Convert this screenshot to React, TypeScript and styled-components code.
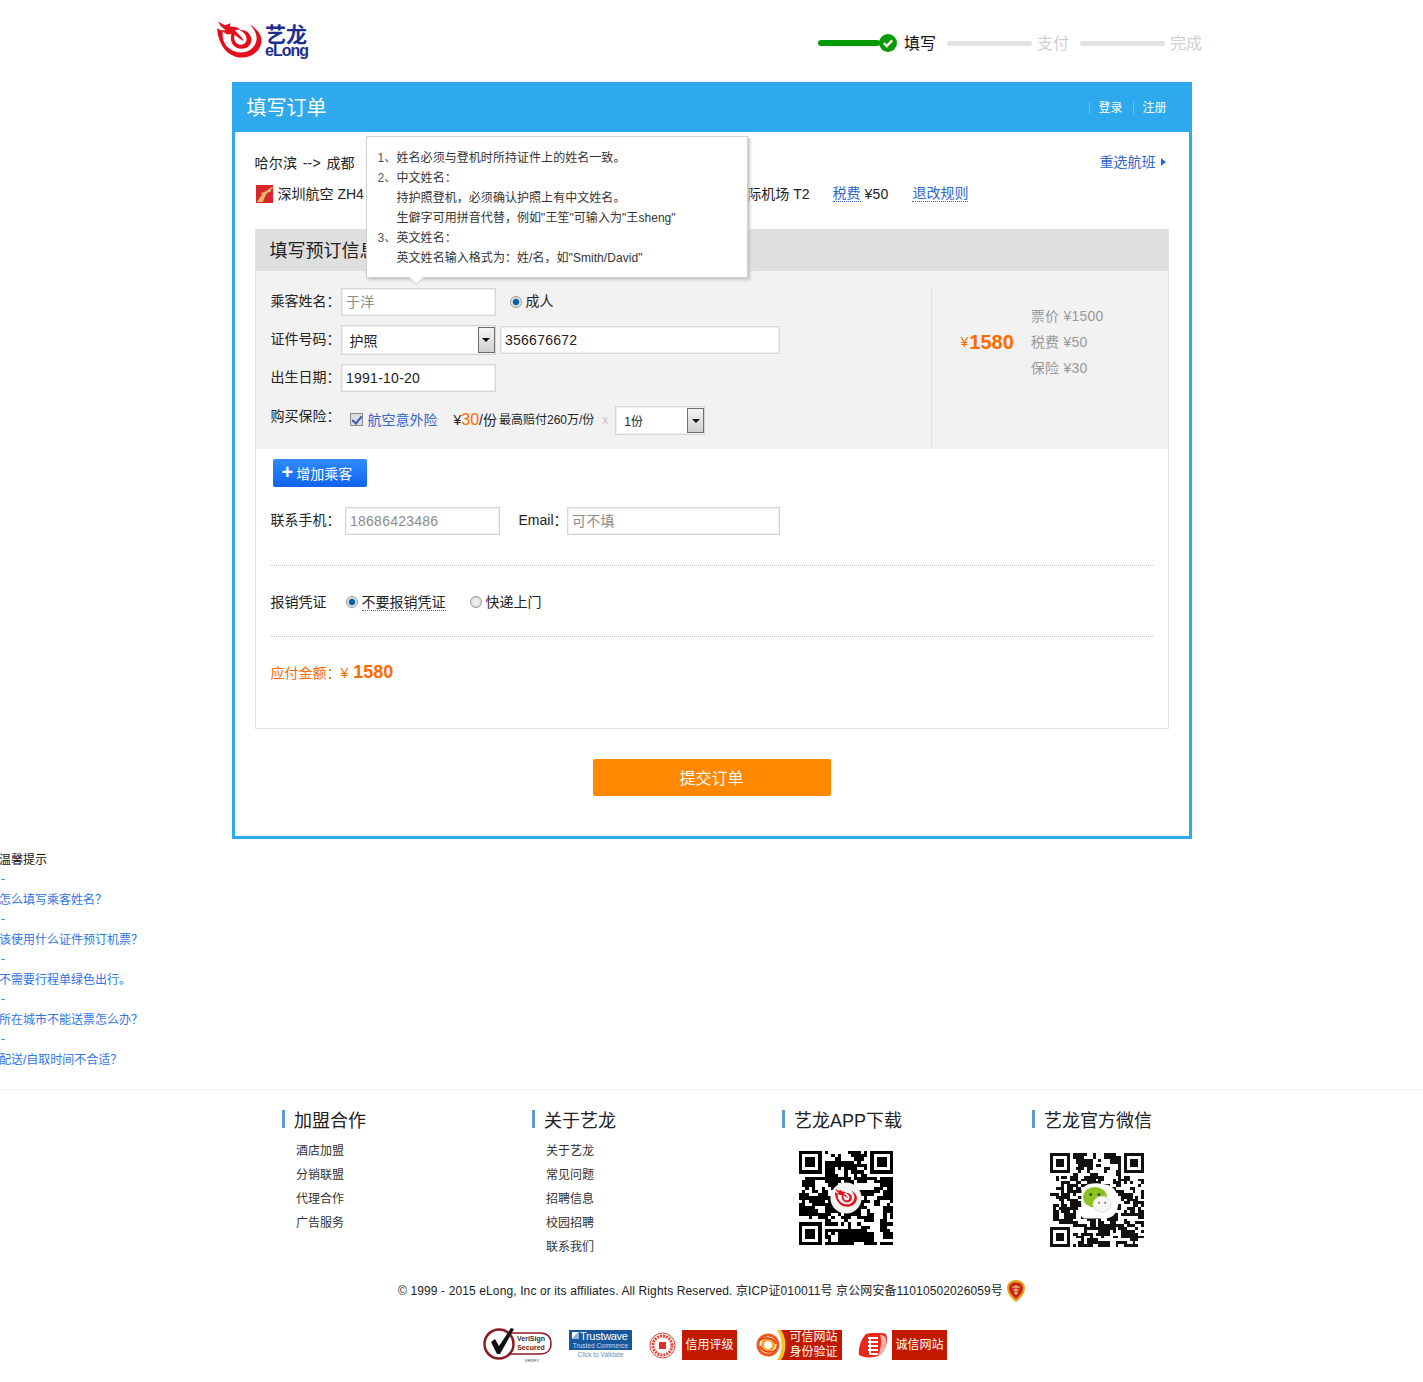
import React from "react";
import styled, { createGlobalStyle } from "styled-components";

const FONT = `"Liberation Sans", "Noto Sans CJK SC", sans-serif`;

const Global = createGlobalStyle`
  html, body { margin: 0; padding: 0; background: #fff; }
  body { font: 14px/20px ${FONT}; color: #222; }
  * { box-sizing: border-box; }
  a { text-decoration: none; }
`;

/* ---------- header ---------- */
const TopBar = styled.header`
  width: 989px; height: 82px; margin: 0 auto; padding: 20px 4px 0 0;
  display: flex; justify-content: space-between; align-items: flex-start;
`;
const Logo = styled.div`display: flex; gap: 3px; width: 92px; height: 40px;`;
const LogoWords = styled.div`display: flex; flex-direction: column; color: #1c2f8f; font-weight: 700; margin-top: 4px;`;
const LogoCn = styled.span`font-size: 21px; line-height: 21px; width: 44px; white-space: nowrap;`;
const LogoEn = styled.span`font-size: 16px; line-height: 12px; letter-spacing: -1px;`;
const Steps = styled.ol`display: flex; align-items: center; height: 20px; margin: 13px 0 0; padding: 0; list-style: none;`;
const Step = styled.li`display: flex; align-items: center; margin-left: 11px; font-size: 16px; color: #d0d0d0;`;
const DoneStep = styled(Step)`margin-left: 0; color: #111;`;
const GreenBar = styled.span`width: 62px; height: 6px; border-radius: 3px; background: #079a07;`;
const GrayBar = styled.span`width: 85px; height: 5px; border-radius: 3px; background: #e2e2e2; margin-right: 5px;`;
const StepLabel = styled.span`padding-top: 2px;`;
const DoneLabel = styled(StepLabel)`margin-left: 7px;`;

/* ---------- order box ---------- */
const OrderBox = styled.main`width: 960px; height: 757px; margin: 0 auto; border: 3px solid #2ea9ed; border-top: 0;`;
const TitleBar = styled.div`
  height: 50px; margin: 0 -3px; padding: 2px 25px 0 15px; background: #2ea9ed; color: #fff;
  display: flex; justify-content: space-between; align-items: center;
`;
const Title = styled.h1`margin: 0; font-size: 20px; font-weight: 400;`;
const Auth = styled.div`display: flex; font-size: 12px;`;
const AuthLink = styled.a`color: #fff; margin-left: 11px; padding-left: 8px; border-left: 1px solid #69c0f1; line-height: 12px; height: 12px;`;
const Content = styled.div`position: relative; padding: 0 20px;`;
const Flight = styled.section`height: 97px; padding: 21px 2px 0 0; margin-left: -1px;`;
const FlightTop = styled.div`display: flex; justify-content: space-between; align-items: center; height: 20px;`;
const Route = styled.div`font-size: 14px; color: #222; word-spacing: 1.5px; letter-spacing: .2px; padding-left: 1px;`;
const Reselect = styled.a`display: flex; align-items: center; gap: 5px; color: #2e66cc; font-size: 14px; margin: 0 1px 2px 0;`;
const Triangle = styled.i`width: 0; height: 0; border-left: 5px solid #2e66cc; border-top: 4px solid transparent; border-bottom: 4px solid transparent;`;
const FlightRow = styled.div`display: flex; align-items: center; margin-top: 11px; height: 20px; padding-left: 2px;`;
const FlightInfo = styled.div`display: flex; justify-content: space-between; width: 532px; margin: 0 23px 0 5px; white-space: nowrap;`;
const DotLink = styled.a`color: #2e66cc; border-bottom: 1px dotted #2e66cc; line-height: 15px;`;
const Fee = styled.span`margin: 0 24px 0 4px; letter-spacing: .2px;`;

const Panel = styled.section`border: 1px solid #e0e0e0; border-top: 0; height: 500px;`;
const PanelHead = styled.h2`margin: 0 -1px; height: 42px; padding: 0 15px; background: #dfdfdf; font-size: 18px; line-height: 45px; font-weight: 400; color: #222;`;
const GreySection = styled.div`display: flex; background: #f2f2f2;`;
const Form = styled.div`width: 675px; padding: 17px 0 14px 15px;`;
const Row = styled.div<{ $mt?: number }>`display: flex; align-items: center; margin-top: ${p => p.$mt ?? 0}px; white-space: nowrap;`;
const Label = styled.label<{ $w?: number; $up?: number }>`
  width: ${p => p.$w ?? 70}px; flex: none; color: #222; margin-bottom: ${p => p.$up ?? 2}px;
`;
const Raised = styled.span`display: flex; align-items: center; margin-bottom: 2px;`;
const Field = styled.input<{ $w: number }>`
  width: ${p => p.$w}px; height: 28px; padding: 0 4.5px; background: #fff; color: #222;
  border: 1px solid #d6d6d6; box-shadow: inset 0 0 0 1px #f1f1f1; outline: none;
  font: 14px ${FONT}; letter-spacing: .25px;
  &::placeholder { color: #8b8b8b; opacity: 1; }
`;
const SelectBox = styled.div<{ $w: number; $h: number; $fs: number; $pad: number }>`
  width: ${p => p.$w}px; height: ${p => p.$h}px; padding-left: ${p => p.$pad}px; background: #fff;
  border: 1px solid #d6d6d6; box-shadow: inset 0 0 0 1px #f1f1f1; font-size: ${p => p.$fs}px;
  display: flex; align-items: center; justify-content: space-between; flex: none;
`;
const SelectValue = styled.span`padding-top: 2px;`;
const SelectArrow = styled.span`
  width: 17px; align-self: stretch; margin: 1px 0; border: 1px solid #6e6e6e; background: linear-gradient(#f4f4f4, #cfcfcf);
  display: flex; align-items: center; justify-content: center;
  &::after { content: ""; border-top: 4px solid #111; border-left: 4px solid transparent; border-right: 4px solid transparent; }
`;
const Gap = styled.span<{ $w: number }>`display: inline-block; flex: none; width: ${p => p.$w}px;`;
const Radio = styled.span<{ $on?: boolean }>`
  width: 12px; height: 12px; border-radius: 50%; flex: none; border: 1px solid #9a9a9a; margin-right: 4px;
  background: ${p => p.$on
    ? "radial-gradient(circle, #0b5fa5 0 2.5px, #3b9ad6 3.2px, #e9e9e9 3.8px, #d8d8d8 100%)"
    : "radial-gradient(circle, #efefef 0 2px, #cfcfcf 100%)"};
`;
const Check = styled.span`
  width: 13px; height: 13px; flex: none; border: 1px solid #8a8a8a; background: #d8dde8; position: relative; margin-right: 5px;
  &::after { content: ""; position: absolute; left: 3px; top: 0; width: 4px; height: 8px; border: solid #3b5aa8; border-width: 0 2px 2px 0; transform: rotate(40deg); }
`;
const InsLink = styled.a`color: #2e66cc; font-size: 14px;`;
const Small = styled.span`font-size: 12px;`;
const Orange = styled.span`color: #ff6a00; font-size: 16px;`;
const Times = styled.span`font-size: 12px; color: #c4c4c4;`;

const PriceSide = styled.aside`
  flex: 1; margin-top: 16px; padding: 16px 0 0 29px; border-left: 1px solid #e0e0e0;
  display: flex; align-items: flex-start; gap: 17px;
`;
const Total = styled.div`height: 78px; display: flex; align-items: center; color: #ff6a00; font-size: 14px; white-space: nowrap;`;
const TotalNum = styled.b`font-size: 20px; margin-left: 1px;`;
const Details = styled.ul`margin: 0; padding: 0; list-style: none; color: #999; line-height: 26px; letter-spacing: .25px;`;

const AddBtn = styled.button`
  display: flex; align-items: center; gap: 3px; width: 94px; height: 28px; margin: 10px 0 0 17px; padding: 0 0 0 9px; border: 0; border-radius: 2px;
  background: linear-gradient(#2f8dfb, #0f63ef); color: #fff; font: 14px ${FONT};
`;
const Plus = styled.span`font-size: 20px; font-weight: 700; line-height: 20px; margin-top: -3px;`;
const Lower = styled.div`padding: 0 15px;`;
const Dotted = styled.div<{ $mt: number }>`margin-top: ${p => p.$mt}px; border-top: 1px dotted #c4c4c4;`;
const ChooseText = styled.span`border-bottom: 1px dotted #2e66cc; line-height: 16px;`;
const Amount = styled.div`margin-top: 25px; color: #ff6a00; display: flex; align-items: baseline; height: 20px;`;
const AmountNum = styled.b`font-size: 18px; margin-left: 5px;`;
const Submit = styled.button`
  display: block; width: 238px; height: 37px; margin: 30px auto 0; padding: 0 0 2px; border: 0; border-radius: 2px; background: #ff8800; color: #fff; font: 16px ${FONT};
`;

/* ---------- tooltip ---------- */
const Tip = styled.div`
  position: absolute; left: 131px; top: 4px; width: 382px; height: 142px; padding: 11px 10px 0 11px; z-index: 2;
  background: #fff; border: 1px solid #cfcfcf; box-shadow: 2px 2px 3px #c4c4c4; font-size: 12px; line-height: 20px; color: #333;
  &::after {
    content: ""; position: absolute; left: 44px; bottom: -6px; width: 10px; height: 10px; background: #fff;
    border: solid #d4d4d4; border-width: 0 1px 1px 0; transform: rotate(45deg);
  }
`;
const TipLine = styled.div`display: flex; white-space: nowrap; letter-spacing: .05px;`;
const TipNum = styled.span`width: 19px; flex: none; color: #555;`;

/* ---------- tips ---------- */
const Hints = styled.section`margin: 11px 0 0 -1px; font-size: 12px; line-height: 20px;`;
const HintTitle = styled.div`color: #111;`;
const HintList = styled.ul`margin: 0; padding: 0; list-style: none;`;
const HintDash = styled.div`color: #2e74e8; padding-left: 2px; margin-top: -1px; margin-bottom: 1px;`;
const HintLink = styled.a`color: #2e74e8; display: block;`;

/* ---------- footer ---------- */
const Footer = styled.footer`margin-top: 19px; border-top: 1px solid #eee; padding-top: 20px;`;
const Cols = styled.div`display: grid; grid-template-columns: repeat(4, 250px); margin-left: 282px; height: 148px;`;
const ColHead = styled.h3`margin: 0; height: 18px; padding-left: 9px; border-left: 3px solid #5b9bd0; font-size: 18px; line-height: 22px; font-weight: 400; color: #222; white-space: nowrap;`;
const ColList = styled.ul`margin: 11px 0 0; padding: 0 0 0 14px; list-style: none; font-size: 12px; line-height: 24px; color: #333;`;
const QrWrap = styled.div<{ $l: number; $t: number }>`margin: ${p => p.$t}px 0 0 ${p => p.$l}px; line-height: 0;`;
const Copy = styled.div`margin-top: 22px; height: 22px; display: flex; justify-content: center; align-items: center; gap: 4px; font-size: 12px; letter-spacing: .12px; color: #222; white-space: nowrap;`;
const Badges = styled.div`margin: 23px auto 0; height: 40px; width: 465px; transform: translateX(3px); display: flex; align-items: center;`;
const RedTag = styled.span<{ $w: number; $ml: number; $pr?: number }>`
  width: ${p => p.$w}px; margin-left: ${p => p.$ml}px; height: 30px; padding-right: ${p => p.$pr ?? 0}px; background: #c21a00; color: #fff; flex: none;
  font-size: 12px; line-height: 15px; display: flex; align-items: center; justify-content: center; text-align: center;
`;
const Trust = styled.div`width: 63px; margin-left: 17px; flex: none; margin-top: -2px;`;
const TrustBlue = styled.div`height: 20px; background: #17589c; color: #fff; overflow: hidden;`;
const TrustTop = styled.div`display: flex; align-items: center; gap: 1px; padding-left: 3px; font-size: 11px; line-height: 12px; letter-spacing: -.3px; white-space: nowrap;`;
const TrustMark = styled.i`width: 7px; height: 7px; flex: none; background: linear-gradient(135deg, #fff 50%, #8fb4da 50%);`;
const TrustSmall = styled.div`font-size: 6.5px; line-height: 8px; text-align: center; color: #c9d8ea; white-space: nowrap;`;
const TrustBelow = styled(TrustSmall)`color: #6d8fbd; line-height: 9px;`;

/* ---------- drawings ---------- */
const SwirlPaths = () => (
  <>
    <path d="M0 8 C1 20 6 33 19 37 C30 40 42 35 45 24 C47 16 42 9 33 4 C40 10 43 19 38 26 C33 34 21 35 13 29 C7 25 5 18 6 11 Z" />
    <path d="M15 13 C12 21 17 29 25 29 C32 29 36 24 35 18 C34 13 29 9 23 10 C28 12 31 16 30 21 C28 26 22 26 19 22 C17 19 17 16 19 13 Z" />
    <path d="M1 1 L8 5 L14 3 L13 6 L20 7 L24 9 L18 10 L22 14 C25 17 27 19 27 21 C24 19 20 16 17 14 L10 14 L4 10 L9 10 L4 6 Z" />
  </>
);
const Swirl = () => (
  <svg width="46" height="40" viewBox="0 0 46 40" fill="#e2101c"><SwirlPaths /></svg>
);
const AirlineIcon = () => (
  <svg width="17" height="18" viewBox="0 0 17 18">
    <rect width="17" height="18" fill="#d9262c" />
    <path d="M1 17 C4 11 9 6 16 2 L17 3 C12 6 9 10 7 17 Z M5 8 L15 5 L15 6.5 L6 9.5 Z" fill="#e8b96a" />
  </svg>
);
const CheckBadge = () => (
  <svg width="18" height="18" viewBox="0 0 18 18" style={{ marginLeft: -1 }}>
    <circle cx="9" cy="9" r="9" fill="#079a07" />
    <path d="M4.8 9.2 L7.8 12 L13.2 6.4" fill="none" stroke="#fff" strokeWidth="2.4" />
  </svg>
);
const qrPath = (n: number, seed: number, black: number) => {
  let s = seed;
  const rnd = () => (s = (s * 1103515245 + 12345) & 0x7fffffff) / 0x7fffffff;
  let d = "";
  const inF = (x: number, y: number) =>
    (x < 8 && y < 8) || (x >= n - 8 && y < 8) || (x < 8 && y >= n - 8);
  const prev: boolean[] = [];
  for (let y = 0; y < n; y++) {
    let left = false;
    for (let x = 0; x < n; x++) {
      const r = rnd();
      const on = r < 0.35 ? left : r < 0.55 ? !!prev[x] : rnd() < black;
      prev[x] = on; left = on;
      if (on && !inF(x, y)) d += `M${x} ${y}h1v1h-1z`;
    }
  }
  [[0, 0], [n - 7, 0], [0, n - 7]].forEach(([x, y]) => {
    d += `M${x} ${y}h7v7h-7zM${x + 1} ${y + 1}v5h5v-5zM${x + 2} ${y + 2}h3v3h-3z`;
  });
  return d;
};
const AppQr = () => (
  <svg width="94" height="94" viewBox="0 0 29 29" shapeRendering="crispEdges">
    <path d={qrPath(29, 77, 0.62)} fill="#000" fillRule="evenodd" />
    <circle cx="14.5" cy="14.5" r="4.8" fill="#f4f4f4" shapeRendering="auto" />
    <svg x="11" y="11.5" width="7" height="6" viewBox="0 0 46 40" fill="#e2101c" shapeRendering="auto"><SwirlPaths /></svg>
  </svg>
);
const WechatQr = () => (
  <svg width="94" height="94" viewBox="0 0 33 33" shapeRendering="crispEdges">
    <path d={qrPath(33, 2015, 0.55)} fill="#111" fillRule="evenodd" />
    <g shapeRendering="auto">
      <path d="M11 14 C11 11 15 10 19 11 C22 11 24 14 24 17 C24 21 22 23 19 23 L12 23 C10 22 10 20 11 19 Z" fill="#fff" />
      <ellipse cx="15.8" cy="15.5" rx="4.2" ry="3.6" fill="#8cc21f" />
      <circle cx="14.3" cy="14.6" r=".5" fill="#243" />
      <circle cx="17.2" cy="14.6" r=".5" fill="#243" />
      <ellipse cx="18.3" cy="18" rx="3.2" ry="2.8" fill="#f5f5f5" stroke="#ddd" strokeWidth=".3" />
      <circle cx="17.2" cy="17.5" r=".4" fill="#888" />
      <circle cx="19.4" cy="17.5" r=".4" fill="#888" />
    </g>
  </svg>
);
const PoliceBadge = () => (
  <svg width="18" height="22" viewBox="0 0 18 22">
    <path d="M9 0 C14 0 18 3 18 8 C18 14 13 19 9 22 C5 19 0 14 0 8 C0 3 4 0 9 0 Z" fill="#e8a51a" />
    <path d="M9 2.5 C13 2.5 16 4.500 16 8 C16 12.500 12 16.500 9 19 C6 16.500 2 12.500 2 8 C2 4.500 5 2.5 9 2.5 Z" fill="#c8261a" />
    <path d="M5 7 H13 M6 10 H12 M7 13 H11 M9 5 V15" stroke="#f5d98a" strokeWidth="1" fill="none" />
  </svg>
);
const VeriSign = () => (
  <svg width="70" height="38" viewBox="0 0 70 38" style={{ flex: "none", marginTop: -3 }}>
    <path d="M26 8 H58 C67 8 69 14 69 19 C69 25 65 29 58 29 H28" fill="none" stroke="#8f1a24" strokeWidth="1.500" />
    <circle cx="17" cy="19" r="14.500" fill="#fff" stroke="#8f1a24" strokeWidth="2.500" />
    <path d="M9 17 L13 14 L17 21 L29 3 L32 4 L18 29 L15 29 Z" fill="#111" />
    <text x="49" y="16" fontSize="7" fontWeight="700" textAnchor="middle" fill="#333" fontFamily="Liberation Sans">VeriSign</text>
    <text x="49" y="25" fontSize="7" fontWeight="700" textAnchor="middle" fill="#7a1a20" fontFamily="Liberation Sans">Secured</text>
    <text x="50" y="37" fontSize="4" textAnchor="middle" fill="#444" fontFamily="Liberation Sans">VERIFY</text>
  </svg>
);
const Seal = () => (
  <svg width="27" height="27" viewBox="0 0 27 27" style={{ marginLeft: 17, flex: "none" }}>
    <circle cx="13.500" cy="13.500" r="12.500" fill="#fff" stroke="#e0463c" strokeWidth="1" />
    <circle cx="13.500" cy="13.500" r="9.500" fill="none" stroke="#e0463c" strokeWidth="3" strokeDasharray="2 1" />
    <rect x="10" y="10" width="7" height="7" fill="#d9302a" />
  </svg>
);
const Rosette = () => (
  <svg width="33" height="30" viewBox="0 0 33 30" style={{ marginLeft: 19, flex: "none" }}>
    <path d="M24 0 H33 V30 H24 C30 22 30 8 24 0 Z" fill="#c21a00" />
    <path d="M21 0 H25 C31 8 31 22 25 30 H21 C27 22 27 8 21 0 Z" fill="#f6c21c" />
    <circle cx="12" cy="15" r="10" fill="none" stroke="#ef5a1d" strokeWidth="3" />
    <circle cx="12" cy="15" r="5.500" fill="none" stroke="#f7a11c" strokeWidth="3" />
    <path d="M4 10 C10 6 18 8 20 14 M20 20 C14 24 6 22 4 16" fill="none" stroke="#e22f14" strokeWidth="1.500" />
  </svg>
);
const ShieldMark = () => (
  <svg width="30" height="25" viewBox="0 0 30 25" style={{ marginLeft: 16, marginRight: 4, flex: "none" }}>
    <path d="M8 1 C14 -.5 24 -.5 28 1 C31 8 27 20 20 23 C14 25 6 25 1 22 C0 15 3 6 8 1 Z" fill="#e8281a" />
    <path d="M22 2 C28 2 29 6 28 12 C27 17 24 21 20 23 C23 16 24 8 22 2 Z" fill="#f3b3a8" />
    <path d="M10 5 H20 M10 9 H20 M10 13 H20 M10 17 H20 M12 5 V21 H20" fill="none" stroke="#fff" strokeWidth="2" />
  </svg>
);

const hints = ["怎么填写乘客姓名？", "该使用什么证件预订机票？", "不需要行程单绿色出行。", "所在城市不能送票怎么办？", "配送/自取时间不合适？"];

export default function App() {
  return (
    <>
      <Global />
      <TopBar>
        <Logo>
          <Swirl />
          <LogoWords>
            <LogoCn>艺龙</LogoCn>
            <LogoEn>eLong</LogoEn>
          </LogoWords>
        </Logo>
        <Steps>
          <DoneStep><GreenBar /><CheckBadge /><DoneLabel>填写</DoneLabel></DoneStep>
          <Step><GrayBar /><StepLabel>支付</StepLabel></Step>
          <Step><GrayBar /><StepLabel>完成</StepLabel></Step>
        </Steps>
      </TopBar>

      <OrderBox>
        <TitleBar>
          <Title>填写订单</Title>
          <Auth>
            <AuthLink>登录</AuthLink>
            <AuthLink>注册</AuthLink>
          </Auth>
        </TitleBar>
        <Content>
          <Tip>
            <TipLine><TipNum>1、</TipNum>姓名必须与登机时所持证件上的姓名一致。</TipLine>
            <TipLine><TipNum>2、</TipNum>中文姓名：</TipLine>
            <TipLine><TipNum /> 持护照登机，必须确认护照上有中文姓名。</TipLine>
            <TipLine><TipNum /> 生僻字可用拼音代替，例如"王笙"可输入为"王sheng"</TipLine>
            <TipLine><TipNum>3、</TipNum>英文姓名：</TipLine>
            <TipLine><TipNum /> 英文姓名输入格式为：姓/名，如"Smith/David"</TipLine>
          </Tip>
          <Flight>
            <FlightTop>
              <Route>哈尔滨 --&gt; 成都</Route>
              <Reselect>重选航班<Triangle /></Reselect>
            </FlightTop>
            <FlightRow>
              <AirlineIcon />
              <FlightInfo><span>深圳航空 ZH4</span><span>国际机场 T2</span></FlightInfo>
              <DotLink>税费</DotLink>
              <Fee>¥50</Fee>
              <DotLink>退改规则</DotLink>
            </FlightRow>
          </Flight>
          <Panel>
            <PanelHead>填写预订信息</PanelHead>
            <GreySection>
              <Form>
                <Row>
                  <Label>乘客姓名：</Label>
                  <Field $w={155} placeholder="于洋" />
                  <Gap $w={14} />
                  <Radio $on />
                  <Raised>成人</Raised>
                </Row>
                <Row $mt={9}>
                  <Label>证件号码：</Label>
                  <SelectBox $w={155} $h={30} $fs={14} $pad={8}><SelectValue>护照</SelectValue><SelectArrow /></SelectBox>
                  <Gap $w={4} />
                  <Field $w={280} defaultValue="356676672" />
                </Row>
                <Row $mt={9}>
                  <Label>出生日期：</Label>
                  <Field $w={155} defaultValue="1991-10-20" />
                </Row>
                <Row $mt={14}>
                  <Label $w={79} $up={9}>购买保险：</Label>
                  <Raised>
                    <Check />
                    <InsLink>航空意外险</InsLink>
                    <Gap $w={16} />
                    ¥<Orange>30</Orange>/份
                    <Gap $w={2} />
                    <Small>最高赔付260万/份</Small>
                    <Gap $w={8} />
                    <Times>x</Times>
                    <Gap $w={7} />
                  </Raised>
                  <SelectBox $w={90} $h={29} $fs={12} $pad={8}><SelectValue>1份</SelectValue><SelectArrow /></SelectBox>
                </Row>
              </Form>
              <PriceSide>
                <Total>¥<TotalNum>1580</TotalNum></Total>
                <Details>
                  <li>票价 ¥1500</li>
                  <li>税费 ¥50</li>
                  <li>保险 ¥30</li>
                </Details>
              </PriceSide>
            </GreySection>
            <AddBtn><Plus>+</Plus>增加乘客</AddBtn>
            <Lower>
              <Row $mt={20}>
                <Label $w={74}>联系手机：</Label>
                <Field $w={155} placeholder="18686423486" />
                <Gap $w={19} />
                <Label $w={48}>Email：</Label>
                <Field $w={213} placeholder="可不填" />
              </Row>
              <Dotted $mt={30} />
              <Row $mt={26}>
                <Label $w={75} $up={0}>报销凭证</Label>
                <Radio $on />
                <ChooseText>不要报销凭证</ChooseText>
                <Gap $w={24} />
                <Radio />
                快递上门
              </Row>
              <Dotted $mt={24} />
              <Amount>应付金额：¥<AmountNum>1580</AmountNum></Amount>
            </Lower>
          </Panel>
          <Submit>提交订单</Submit>
        </Content>
      </OrderBox>

      <Hints>
        <HintTitle>温馨提示</HintTitle>
        <HintList>
          {hints.map(h => (
            <li key={h}>
              <HintDash>-</HintDash>
              <HintLink>{h}</HintLink>
            </li>
          ))}
        </HintList>
      </Hints>

      <Footer>
        <Cols>
          <div>
            <ColHead>加盟合作</ColHead>
            <ColList><li>酒店加盟</li><li>分销联盟</li><li>代理合作</li><li>广告服务</li></ColList>
          </div>
          <div>
            <ColHead>关于艺龙</ColHead>
            <ColList><li>关于艺龙</li><li>常见问题</li><li>招聘信息</li><li>校园招聘</li><li>联系我们</li></ColList>
          </div>
          <div>
            <ColHead>艺龙APP下载</ColHead>
            <QrWrap $l={17} $t={23}><AppQr /></QrWrap>
          </div>
          <div>
            <ColHead>艺龙官方微信</ColHead>
            <QrWrap $l={18} $t={25}><WechatQr /></QrWrap>
          </div>
        </Cols>
        <Copy>
          © 1999 - 2015 eLong, Inc or its affiliates. All Rights Reserved. 京ICP证010011号 京公网安备11010502026059号
          <PoliceBadge />
        </Copy>
        <Badges>
          <VeriSign />
          <Trust>
            <TrustBlue>
              <TrustTop><TrustMark />Trustwave</TrustTop>
              <TrustSmall>Trusted Commerce</TrustSmall>
            </TrustBlue>
            <TrustBelow>Click to Validate</TrustBelow>
          </Trust>
          <Seal />
          <RedTag $w={55} $ml={6}>信用评级</RedTag>
          <Rosette />
          <RedTag $w={53} $ml={0} $pr={4}>可信网站<br />身份验证</RedTag>
          <ShieldMark />
          <RedTag $w={55} $ml={0}>诚信网站</RedTag>
        </Badges>
      </Footer>
    </>
  );
}
